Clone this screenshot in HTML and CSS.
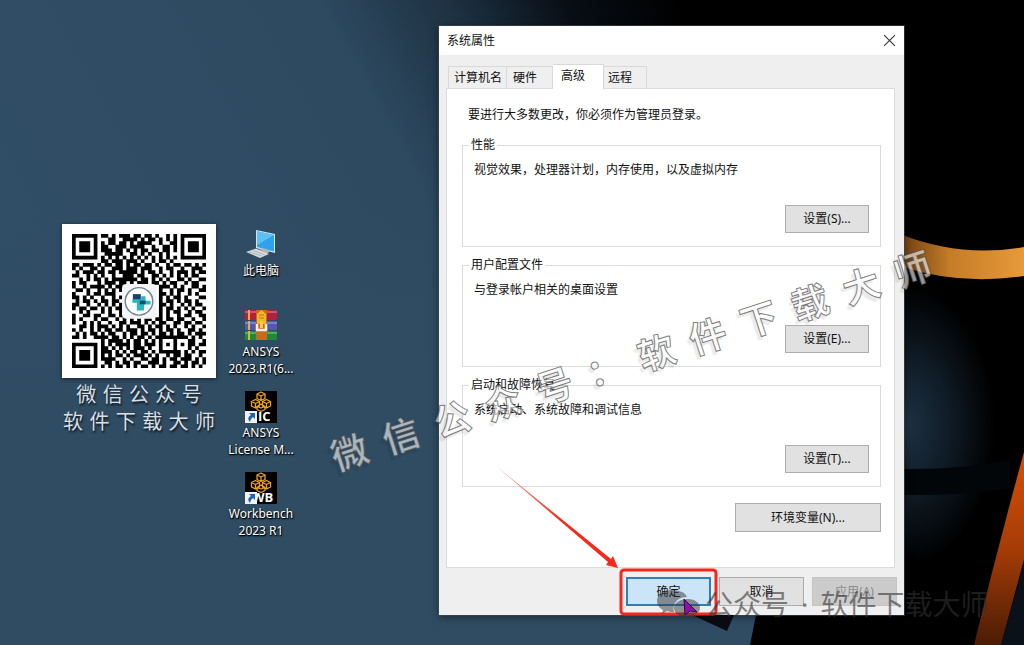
FILE: index.html
```html
<!DOCTYPE html>
<html lang="zh-CN">
<head>
    <meta charset="UTF-8">
    <meta name="viewport" content="width=device-width, initial-scale=1.0">
    <title>系统属性</title>
    <link rel="stylesheet" href="styles.css">
</head>
<body>

    <svg class="wallpaper" viewBox="0 0 1024 645" preserveAspectRatio="xMaxYMin slice" aria-hidden="true">
        <defs>
            <linearGradient id="sky" x1="0" y1="0.35" x2="1" y2="0">
                <stop offset="0" stop-color="#304e66"/>
                <stop offset="0.38" stop-color="#2e4a61"/>
                <stop offset="0.5" stop-color="#1d3142"/>
                <stop offset="0.6" stop-color="#080e15"/>
                <stop offset="0.7" stop-color="#000"/>
            </linearGradient>
            <linearGradient id="floor" x1="0" y1="0" x2="0" y2="1">
                <stop offset="0" stop-color="#2f4c63" stop-opacity="0"/>
                <stop offset="0.5" stop-color="#2f4c63"/>
            </linearGradient>
            <radialGradient id="glow" cx="905" cy="425" r="1" gradientUnits="userSpaceOnUse" gradientTransform="translate(905 425) scale(90 140) translate(-905 -425)">
                <stop offset="0" stop-color="#1d3344"/>
                <stop offset="0.5" stop-color="#0f1b25"/>
                <stop offset="1" stop-color="#000"/>
            </radialGradient>
            <linearGradient id="ring" x1="0" y1="0" x2="1" y2="0">
                <stop offset="0" stop-color="#6b3d12"/>
                <stop offset="0.4" stop-color="#c47c27"/>
                <stop offset="1" stop-color="#e89a3a"/>
            </linearGradient>
            <linearGradient id="leg" x1="0" y1="0" x2="0" y2="1">
                <stop offset="0" stop-color="#d85008"/>
                <stop offset="0.5" stop-color="#a53c06"/>
                <stop offset="1" stop-color="#4a1c05"/>
            </linearGradient>
        </defs>
        <rect width="1024" height="645" fill="url(#sky)"/>
        <rect y="200" width="760" height="445" fill="url(#floor)"/>
        <path d="M759 600 L750 645 H1024 V0 H890 V600Z" fill="#000"/>
        <path d="M900 270 H1024 V580 H900Z" fill="url(#glow)"/>
        <path d="M900 469 Q960 470 1010 460 V488 Q960 496 900 495Z" fill="#030609"/>
        <path d="M900 234 Q960 258 1024 247 V276 Q960 286 900 266Z" fill="url(#ring)"/>
        <path d="M1024 452 Q997 550 974 645 H1001 L1024 560Z" fill="url(#leg)"/>
        <path d="M1024 560 L1001 645 H1024Z" fill="#0a1118"/>
    </svg>

    <main class="desktop">
        <figure class="qr-card">
            <svg class="qr" id="qr" viewBox="0 0 37 37" role="img" aria-label="二维码">
                <path id="qr-dots" fill="#000"/>
                <rect x="13.8" y="13.8" width="9.6" height="9.6" rx="1.2" fill="#f4f4f4"/>
                <circle cx="18.5" cy="18.6" r="3.8" fill="#fff" stroke="#6f8492" stroke-width="0.4"/>
                <path d="M16.8 16.6 h2.2 v2.2 h-2.2z" fill="#1c3f6e"/>
                <path d="M19.1 17.2 h1.2 v1.2 h1.4 v1.1 h-1.8 v1.6 h-2 v-2.1 h-1.2 v-1 h2.4z" fill="#28b5bd"/>
                <path d="M18.7 18.4 h1.6 v1 h-1.6z" fill="#16506f"/>
            </svg>
            <figcaption>微 信 公 众 号<br>软 件 下 载 大 师</figcaption>
        </figure>

        <nav class="shortcuts">
            <a class="shortcut" href="#">
                <svg viewBox="0 0 34 34">
                    <path d="M12 2 L31 6 V25 L12 20Z" fill="#d7e6ee"/>
                    <path d="M13 3.200 L30 7 V23.500 L13 19Z" fill="#2ea3ea"/>
                    <path d="M13 3.200 L30 7 L13 17Z" fill="#5cc0f5"/>
                    <path d="M15 21 L19 20 L27 23 L22 26Z" fill="#aab4ba"/>
                    <path d="M2 24 L12 20.500 L25 26 L16 30Z" fill="#d5d9db"/>
                    <path d="M5 24 L18 28 M9 22.500 L21 27" stroke="#a9afb3" stroke-width="0.8"/>
                </svg>
                <span>此电脑</span>
            </a>
            <a class="shortcut" href="#">
                <svg viewBox="0 0 34 34">
                    <rect x="1" y="1" width="32" height="10" rx="1" fill="#b51f3f"/>
                    <rect x="1" y="12" width="32" height="9" rx="1" fill="#5257b0"/>
                    <rect x="1" y="22" width="32" height="9" rx="1" fill="#1e8a36"/>
                    <path d="M1 3 H33 M1 14 H33 M1 24 H33" stroke="#fff" stroke-opacity="0.25" stroke-width="2"/>
                    <path d="M5 1 V11 M5 12 V21 M5 22 V31" stroke="#e0b23c" stroke-width="2"/>
                    <rect x="12" y="1" width="11" height="30" fill="#c9691c"/>
                    <path d="M13 5 L17.500 1 L22 5 V15 H13Z" fill="#f3b52c"/>
                    <path d="M15 6 H20 M15 9 H20" stroke="#b8741a" stroke-width="1"/>
                    <path d="M13 15 V21 H22 V15" fill="none" stroke="#f5f0e6" stroke-width="2.500"/>
                    <rect x="16" y="12" width="3" height="7" fill="#f7d04a"/>
                </svg>
                <span>ANSYS<br>2023.R1(6...</span>
            </a>
            <a class="shortcut" href="#">
                <svg viewBox="0 0 34 34">
                    <rect x="1" y="1" width="32" height="32" fill="#000"/>
                    <use href="#cubes"/>
                    <text class="mark" x="14" y="31">IC</text>
                    <use href="#link-arrow"/>
                </svg>
                <span>ANSYS<br>License M...</span>
            </a>
            <a class="shortcut" href="#">
                <svg viewBox="0 0 34 34">
                    <rect x="1" y="1" width="32" height="32" fill="#000"/>
                    <use href="#cubes"/>
                    <text class="mark" x="8" y="31">WB</text>
                    <use href="#link-arrow"/>
                </svg>
                <span>Workbench<br>2023 R1</span>
            </a>
        </nav>

        <section class="window" aria-label="系统属性">
            <header class="titlebar">
                <span>系统属性</span>
                <button class="close" aria-label="关闭">
                    <svg viewBox="0 0 12 12"><path d="M1 1 L11 11 M11 1 L1 11" stroke="#333" stroke-width="1"/></svg>
                </button>
            </header>

            <div class="tabs" role="tablist">
                <button class="tab tab-wide" role="tab">计算机名</button>
                <button class="tab" role="tab">硬件</button>
                <button class="tab active" role="tab" aria-selected="true">高级</button>
                <button class="tab tab-last" role="tab">远程</button>
            </div>

            <div class="panel" role="tabpanel">
                <p class="intro">要进行大多数更改，你必须作为管理员登录。</p>
                <fieldset>
                    <legend>性能</legend>
                    <p>视觉效果，处理器计划，内存使用，以及虚拟内存</p>
                    <button class="btn">设置(S)...</button>
                </fieldset>
                <fieldset>
                    <legend>用户配置文件</legend>
                    <p>与登录帐户相关的桌面设置</p>
                    <button class="btn">设置(E)...</button>
                </fieldset>
                <fieldset>
                    <legend>启动和故障恢复</legend>
                    <p>系统启动、系统故障和调试信息</p>
                    <button class="btn">设置(T)...</button>
                </fieldset>
                <button class="btn btn-env">环境变量(N)...</button>
            </div>

            <footer class="actions">
                <button class="btn btn-ok">确定</button>
                <button class="btn">取消</button>
                <button class="btn" disabled>应用(A)</button>
            </footer>
        </section>

        <div class="watermark">微  信  公  众  号  ：  软  件  下  载  大  师</div>

        <svg class="marks" viewBox="0 0 1024 645" aria-hidden="true">
            <defs>
                <linearGradient id="fade" x1="497" y1="467" x2="560" y2="520" gradientUnits="userSpaceOnUse">
                    <stop offset="0" stop-color="#f0251b" stop-opacity="0.4"/>
                    <stop offset="1" stop-color="#f52a1c"/>
                </linearGradient>
                <g id="cubes" fill="none" stroke="#f0a21e" stroke-width="1.300" stroke-linejoin="round">
                    <path d="M17 2 L21 4 V8.500 L17 10.500 L13 8.500 V4Z M13 4 L17 6 L21 4 M17 6 V10.500"/>
                    <path d="M11.500 9.500 L15.500 11.500 V16 L11.500 18 L7.500 16 V11.500Z M7.500 11.500 L11.500 13.500 L15.500 11.500 M11.500 13.500 V18"/>
                    <path d="M22.500 9.500 L26.500 11.500 V16 L22.500 18 L18.500 16 V11.500Z M18.500 11.500 L22.500 13.500 L26.500 11.500 M22.500 13.500 V18"/>
                    <path d="M17 14 L21 16.500 V19.500 L17 21.500 L13 19.500 V16.500Z M13 16.500 L17 18 L21 16.500"/>
                </g>
                <g id="link-arrow">
                    <rect x="1" y="21" width="12" height="12" fill="#f2f2f2"/>
                    <path d="M5 23 H11 V29 L9 27 Q6 29 6 32 Q2 28 7 25Z" fill="#1f63b5"/>
                </g>
            </defs>
            <path d="M496 466 L608 562 L606 565 L618 568 L613 556 L611 559Z" fill="url(#fade)"/>
            <path d="M690 614 L734 615 L727 631Z" fill="#080b10"/>
            <rect x="621" y="570" width="95" height="44" rx="3" fill="none" stroke="#f3281c" stroke-width="3"/>
            <g fill="#333" fill-opacity="0.5">
                <path d="M671 590 C663 590 657 595 657 601 C657 605 659 608 663 610 L662 614 L667 611 C669 612 672 612 674 612 C672 603 678 597 687 597 C685 592 679 590 671 590Z"/>
                <path d="M688 599 C680 599 674 603 674 608 C674 614 681 618 689 617 L695 619 L694 615 C698 613 700 611 700 608 C700 603 695 599 688 599Z"/>
            </g>
            <path d="M684 599 L697 612 L690 611 L685 615Z" fill="#8a12a8" stroke="#35063f" stroke-width="1"/>
        </svg>

        <div class="account"><span>公众号</span><span>·</span><span>软件下载大师</span></div>
    </main>

    <script src="script.js"></script>
</body>
</html>
```
FILE: styles.css
```css
body {
    margin: 0;
    min-height: 100vh;
    background-color: #2f4c63;
    font-family: "Noto Sans", "Noto Sans CJK SC", sans-serif;
    font-size: 12px;
    line-height: 18px;
    color: #111;
    overflow: hidden;
}

p, figure {
    margin: 0;
}

button {
    font: inherit;
    color: inherit;
    padding: 0;
}

.wallpaper {
    position: absolute;
    width: 100%;
    height: 100%;
}

.desktop {
    position: relative;
    min-height: 100vh;
}

/* desktop items */
.qr-card {
    position: absolute;
    left: 62px;
    top: 224px;
    width: 154px;
}

.qr {
    display: block;
    box-sizing: border-box;
    width: 154px;
    height: 154px;
    padding: 10px;
    background-color: #fff;
    box-shadow: 0 1px 4px rgba(0, 0, 0, 0.6);
}

figcaption {
    margin-top: 4px;
    font-family: "DejaVu Sans", "Noto Sans CJK SC", sans-serif;
    font-size: 20px;
    font-weight: 400;
    line-height: 27px;
    color: #d9dfe3;
    text-align: center;
    white-space: nowrap;
    text-shadow: 1px 2px 2px rgba(0, 0, 0, 0.7);
}

.shortcuts {
    position: absolute;
    left: 216px;
    top: 228px;
    display: flex;
    flex-direction: column;
}

.shortcut {
    display: flex;
    flex-direction: column;
    align-items: center;
    width: 90px;
    height: 81px;
    line-height: 17px;
    color: #fff;
    text-align: center;
    text-decoration: none;
    text-shadow: 0 1px 2px #000, 1px 1px 1px #000;
}

.shortcut svg {
    flex: none;
    width: 34px;
    height: 34px;
    overflow: visible;
}

.mark {
    font-family: "Open Sans", sans-serif;
    font-size: 13px;
    font-weight: 700;
    fill: #fff;
}

/* dialog */
.window {
    position: absolute;
    left: 439px;
    top: 26px;
    width: 465px;
    background-color: #efefef;
    box-shadow: 0 0 0 1px rgba(70, 75, 80, 0.6), 0 2px 8px rgba(0, 0, 0, 0.5);
}

.titlebar {
    display: flex;
    align-items: center;
    justify-content: space-between;
    height: 29px;
    padding: 0 8px;
    background-color: #fff;
}

.close {
    display: flex;
    border: none;
    background: none;
}

.close svg {
    width: 13px;
    height: 13px;
}

.tabs {
    display: flex;
    align-items: flex-end;
    height: 24px;
    padding: 9px 9px 0;
}

.tab {
    box-sizing: border-box;
    width: 46px;
    height: 22px;
    padding-left: 6px;
    text-align: left;
    border: 1px solid #d9d9d9;
    border-width: 1px 1px 0 0;
    background-color: #efefef;
}

.tab-wide {
    width: 59px;
    padding-left: 5px;
    border-left-width: 1px;
}

.tab.active {
    position: relative;
    width: 51px;
    height: 25px;
    margin-bottom: -1px;
    padding: 0 0 2px 8px;
    background-color: #fff;
}

.tab-last {
    width: 43px;
    padding-left: 4px;
}

.panel {
    display: flex;
    flex-direction: column;
    gap: 10px;
    margin: 0 9px 0 7px;
    padding: 17px 13px 35px 15px;
    border: 1px solid #dcdcdc;
    background-color: #fff;
}

.intro {
    padding: 0 0 3px 6px;
}

fieldset {
    margin: 0;
    padding: 8px 11px 13px 6px;
    border: 1px solid #dcdcdc;
}

legend {
    padding: 0 2px;
    line-height: 16px;
}

fieldset p {
    padding-left: 5px;
}

.btn {
    box-sizing: border-box;
    width: 85px;
    height: 29px;
    border: 1px solid #adadad;
    background-color: #e1e1e1;
}

fieldset .btn {
    display: block;
    width: 84px;
    height: 28px;
    margin: 26px 0 0 auto;
}

.btn-env {
    align-self: flex-end;
    width: 146px;
    margin-top: 6px;
}

.btn:disabled {
    color: #8c8c8c;
    border-color: #c4c4c4;
    background-color: #cbcbcb;
}

.btn-ok {
    border: 2px solid #2d7fb8;
    background-color: #cce4f7;
}

.actions {
    display: flex;
    justify-content: flex-end;
    gap: 8px;
    padding: 9px 7px;
}

/* overlays */
.watermark {
    position: absolute;
    left: 316px;
    top: 332px;
    font-family: "Noto Sans CJK SC", sans-serif;
    font-size: 37px;
    font-weight: 700;
    line-height: 54px;
    white-space: pre;
    color: rgba(255, 255, 255, 0.6);
    -webkit-text-stroke: 1px rgba(70, 70, 70, 0.7);
    text-shadow: -4px 3px 1px rgba(0, 0, 0, 0.08);
    transform: rotate(-18deg);
    pointer-events: none;
}

.marks {
    position: absolute;
    left: 0;
    top: 0;
    width: 1024px;
    height: 645px;
    pointer-events: none;
}

.account {
    position: absolute;
    left: 705px;
    top: 584px;
    display: flex;
    gap: 12px;
    font-size: 28px;
    font-weight: 400;
    line-height: 40px;
    white-space: nowrap;
    color: rgba(50, 50, 50, 0.6);
    pointer-events: none;
}
```
FILE: script.js
```js
const rows = [
    "#######.##.#.###.##.##.#..#.#.#######",
    "#.....#...##..####.#.##.#.#.#.#.....#",
    "#.###.#.#.##.##.#.####..#..##.#.###.#",
    "#.###.#.##..###.####..#..##.#.#.###.#",
    "#.###.#.###.##.#.#.##.##.##.#.#.###.#",
    "#.....#..#####..##.#.#..#.#...#.....#",
    "#######.#.#.#.#.#.#.#.#.#.#.#.#######",
    "........##.###.###.#..#.##.#.........",
    "##.###.#.##.##.#.##.##.#..#.##.##.#.#",
    "#.#..##.#..###.###.###..#.##..#..###.",
    ".#.###.##.##.#####.#.##.#..#.###.#.##",
    "##..#.#.#..#..###.##..##.#.#.#.#.##..",
    "..#.#.##.#.#######.##.#.#.#..##.#..##",
    "#.##...#.###.##.#.###.##.#.##..#.##..",
    "#..#.####.#.##..........###.#.#..##.#",
    ".##.#..#.#.#.#..........#..#.##.#..##",
    "#...#.##.###..#.........##.#.#..#.#..",
    "##.#.#..#..#.#..........#.#.##.#...##",
    ".#.##.#.##.##.#.........#.##.#.##.#..",
    "##..#..#.#.#.#..........##.#..#.#.##.",
    "#.##.##.#.#.##..........#.##.#.#.#..#",
    "..#.#...#.#..#..........#.#.##..#.##.",
    "#..##.##..##.##.........#.#..#.##..##",
    "#.#...#.##..#.#.#.#.##.##.##.##..#..#",
    "#..#.#.#..#..##.###.#.#.##..##.##.##.",
    "..##.#.###.#.#.#..##.#.##.#.#..#.#..#",
    "#.#..#.#.##.##.###.#.##.#.##.#..##.#.",
    ".#.#.##.#.##..#.##.##.#.##.#.##.#.###",
    "##.#..####.##.#.#.##.#.#########.#.#.",
    "........#.####.#.##.#.#.#...#...##..#",
    "#######.#.#.####.##.###.#.#.#.#.##.##",
    "#.....#.##.#.#.#.###.#..#...#...#.#..",
    "#.###.#.###.#.#.##.##.#.######.#.#.##",
    "#.###.#.#.#.##.#.###.#.#..#.##.##..#.",
    "#.###.#.####..#.#..##.##.#.##.###.#.#",
    "#.....#..##.#.##.##..###.#..##.#.##.#",
    "#######.#.#.##.#.#.##.#.##.##.##.#.#."
];

let d = "";
rows.forEach((row, y) => {
    [...row].forEach((cell, x) => {
        if (cell === "#") {
            d += `M${x} ${y}h1.02v1.02h-1.02z`;
        }
    });
});
document.getElementById("qr-dots").setAttribute("d", d);
```
